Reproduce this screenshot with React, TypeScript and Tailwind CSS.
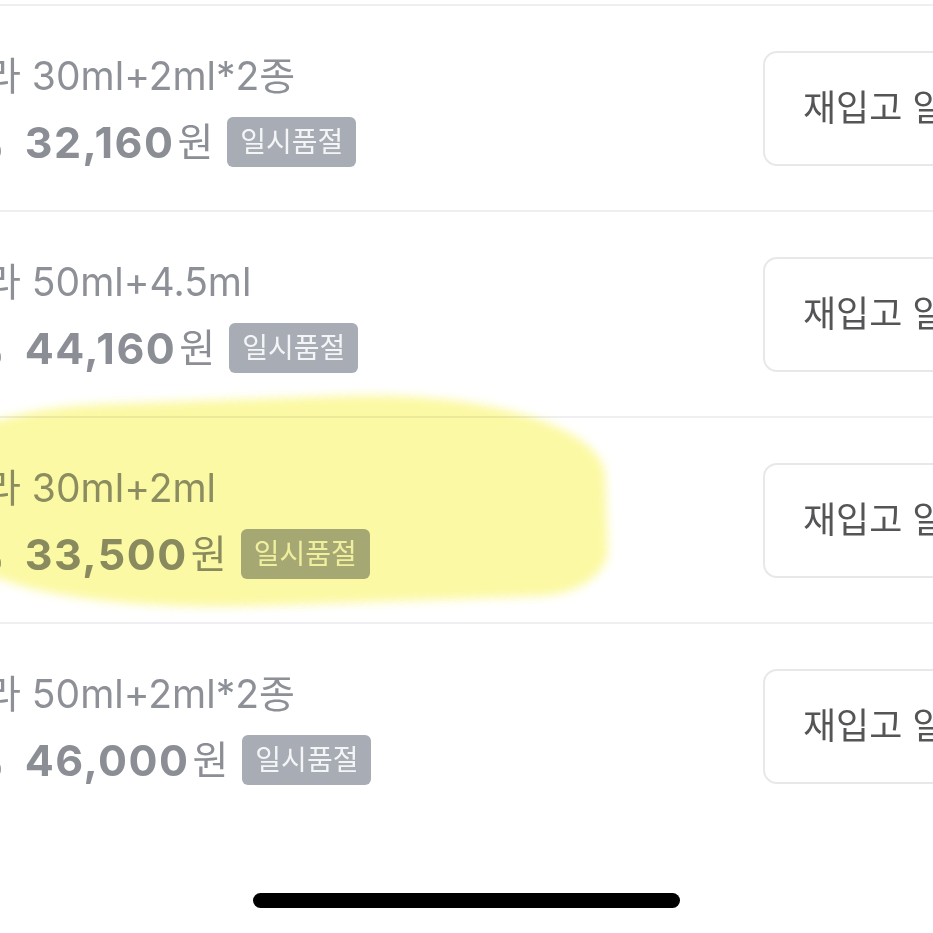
const items = [
  { name: "30ml+2ml*2종", price: "32,160" },
  { name: "50ml+4.5ml", price: "44,160" },
  { name: "30ml+2ml", price: "33,500" },
  { name: "50ml+2ml*2종", price: "46,000" },
];

function OptionRow({ name, price }: { name: string; price: string }) {
  return (
    <div className="flex h-[206px] items-center border-t-2 border-[#efeff1]">
      <div className="-ml-[15px] flex flex-1 flex-col gap-[12px] pt-[10px]">
        <div className="text-[39px] leading-[46px] text-[#8d9096] whitespace-nowrap">
          라 {name}
        </div>
        <div className="flex items-center whitespace-nowrap">
          <span className="-ml-[23px] mr-[20px] text-[42px] font-bold text-[#8b8e94]">%</span>
          <span className="text-[43px] leading-[52px] font-bold tracking-[1.5px] text-[#8b8e94]">{price}</span>
          <span className="ml-[3px] text-[39px] leading-[52px] text-[#8b8e94]">원</span>
          <span className="ml-[14px] rounded-[6px] bg-[#a8acb4] px-[13px] py-[6px] text-[28px] leading-[38px] text-[#f4f5f7]">
            일시품절
          </span>
        </div>
      </div>
      <button className="mr-[-100px] flex h-[115px] w-[270px] shrink-0 items-center rounded-[14px] border-2 border-[#e8e8ea] bg-white pl-[38px] text-[36px] text-[#555558] whitespace-nowrap">
        재입고 알림
      </button>
    </div>
  );
}

export default function App() {
  return (
    <div
      className="relative h-[933px] w-[933px] overflow-hidden bg-white"
      style={{ fontFamily: 'Inter, "Noto Sans CJK KR", sans-serif' }}
    >
      <div className="pt-[4px]">
        {items.map((item) => (
          <OptionRow key={item.name} name={item.name} price={item.price} />
        ))}
      </div>

      {/* highlighter mark over the third option */}
      <div className="pointer-events-none absolute left-[-40px] top-[398px] h-[207px] w-[646px] rotate-[-2deg] rounded-[150px_260px_70px_300px/40px_90px_45px_70px] bg-[#fbf893] opacity-85 mix-blend-multiply blur-[5px]" />

      <div className="absolute bottom-[25px] left-[253px] h-[15px] w-[427px] rounded-full bg-black" />
    </div>
  );
}
